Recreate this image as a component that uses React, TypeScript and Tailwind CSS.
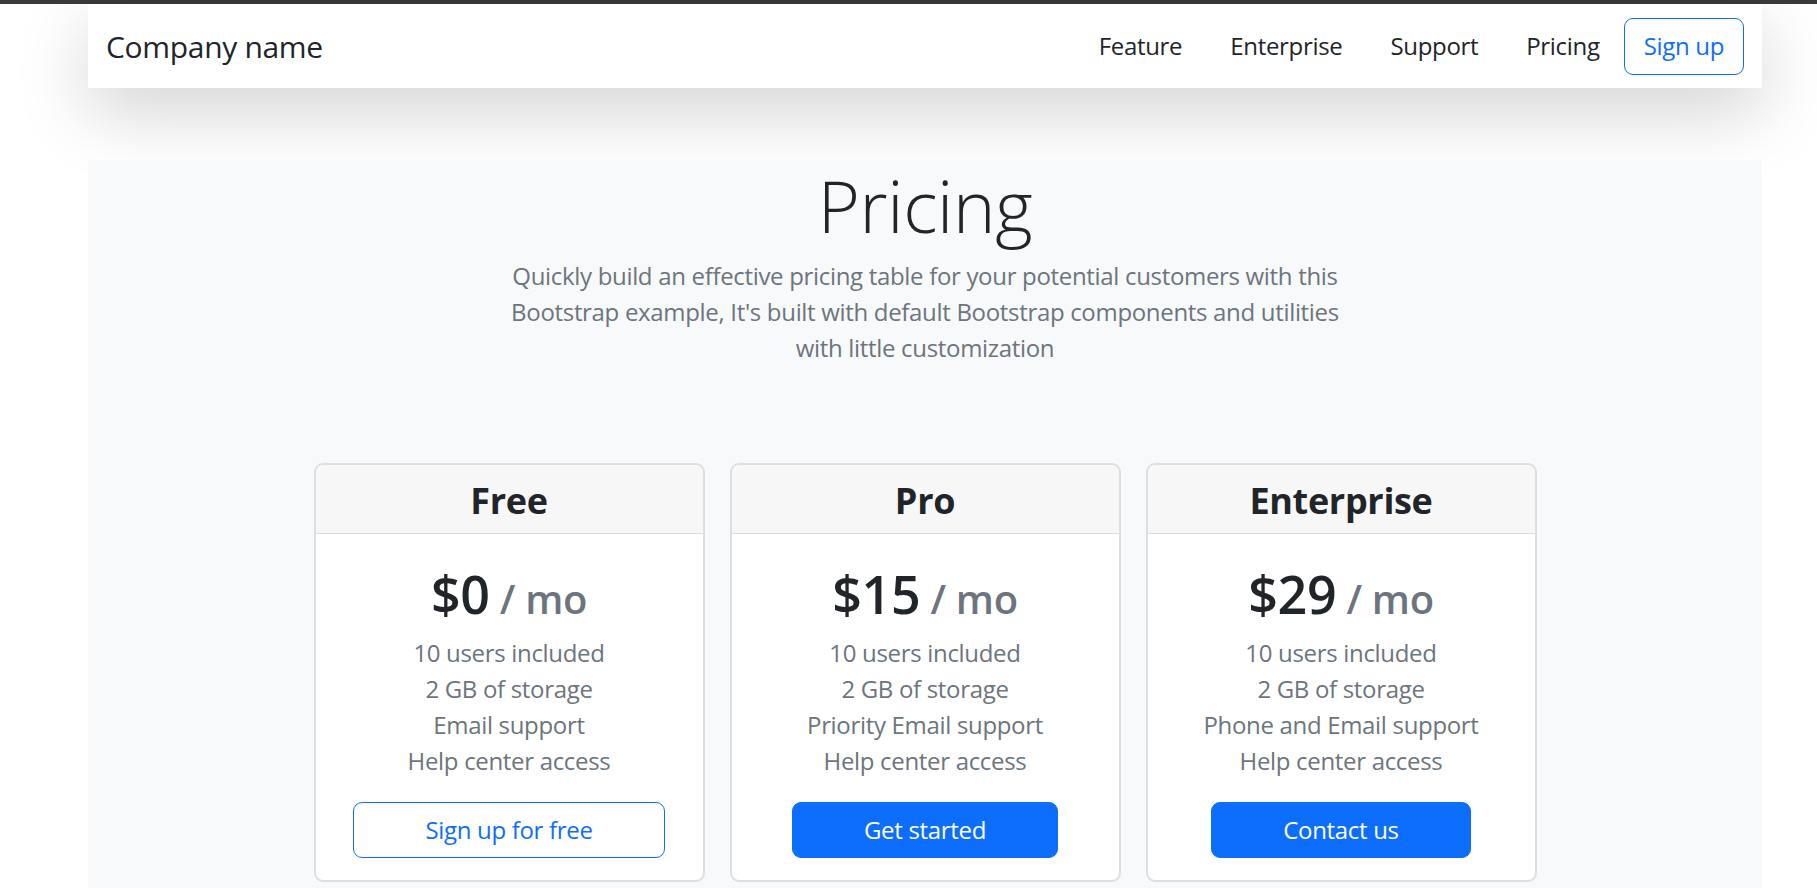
import React from "react";

const navLinks = ["Feature", "Enterprise", "Support", "Pricing"];

const plans = [
  {
    name: "Free",
    price: "$0",
    features: ["10 users included", "2 GB of storage", "Email support", "Help center access"],
    cta: "Sign up for free",
    outline: true,
  },
  {
    name: "Pro",
    price: "$15",
    features: ["10 users included", "2 GB of storage", "Priority Email support", "Help center access"],
    cta: "Get started",
    outline: false,
  },
  {
    name: "Enterprise",
    price: "$29",
    features: ["10 users included", "2 GB of storage", "Phone and Email support", "Help center access"],
    cta: "Contact us",
    outline: false,
  },
];

function PlanCard({ plan }: { plan: (typeof plans)[number] }) {
  return (
    <div className="flex flex-col w-[391px] bg-white border-2 border-[#dedede] rounded-[9px] overflow-hidden">
      {/* Card header */}
      <div className="bg-[#f7f7f7] border-b border-[#dadada] pt-[14px] pb-[10px] text-center">
        <h4 className="text-[36px] leading-[1.2] font-bold text-[#212529]">{plan.name}</h4>
      </div>

      {/* Card body */}
      <div className="flex flex-col items-center pt-[27px] pb-[22px] text-center">
        <h1 className="text-[52px] leading-[66px] font-semibold text-[#212529]">
          {plan.price}
          <small className="text-[40px] leading-none font-semibold text-[#6c757d]"> / mo</small>
        </h1>
        <ul className="mt-2 text-[24px] leading-[36px] text-[#6c757d]">
          {plan.features.map((f) => (
            <li key={f}>{f}</li>
          ))}
        </ul>
        {plan.outline ? (
          <button className="mt-[23px] h-[56px] px-[71px] text-[24px] leading-[36px] border border-[#0d6efd] text-[#0d6efd] bg-white rounded-[9px]">
            {plan.cta}
          </button>
        ) : (
          <button className="mt-[23px] h-[56px] px-[71px] text-[24px] leading-[36px] border border-[#0d6efd] bg-[#0d6efd] text-white rounded-[9px]">
            {plan.cta}
          </button>
        )}
      </div>
    </div>
  );
}

export default function App() {
  return (
    <div className="min-h-screen bg-white font-['Open_Sans',sans-serif] tracking-[-0.02em] text-[#212529]">
      <div className="h-1 bg-[#3a3a3a]" />

      <div className="ml-[88px] mr-[55px]">
        {/* Navbar */}
        <header className="relative z-0 flex items-center justify-between h-[84px] px-[18px] bg-white shadow-[0_24px_72px_rgba(0,0,0,0.175)]">
          <span className="text-[30px] leading-[1.5]">Company name</span>
          <nav className="flex items-center">
            {navLinks.map((l, i) => (
              <a
                key={l}
                href="#"
                className={
                  i === navLinks.length - 1
                    ? "mr-6 text-[24px] leading-[36px] text-[#212529]"
                    : "mr-12 text-[24px] leading-[36px] text-[#212529]"
                }
              >
                {l}
              </a>
            ))}
            <button className="h-[57px] px-[19px] text-[24px] leading-[36px] border border-[#0d6efd] text-[#0d6efd] rounded-[9px]">
              Sign up
            </button>
          </nav>
        </header>

        {/* Pricing section */}
        <main className="relative mt-[72px] bg-[#f8f9fa] pt-[2px] pb-10">
          <div className="flex flex-col items-center text-center">
            <h1 className="text-[72px] leading-[1.2] font-light">Pricing</h1>
            <p className="mt-[10px] text-[24px] leading-[36px] text-[#6c757d]">
              Quickly build an effective pricing table for your potential customers with this
              <br />
              Bootstrap example, It's built with default Bootstrap components and utilities
              <br />
              with little customization
            </p>
          </div>

          <div className="mt-[97px] flex justify-center gap-[25px]">
            {plans.map((p) => (
              <PlanCard key={p.name} plan={p} />
            ))}
          </div>
        </main>
      </div>
    </div>
  );
}
